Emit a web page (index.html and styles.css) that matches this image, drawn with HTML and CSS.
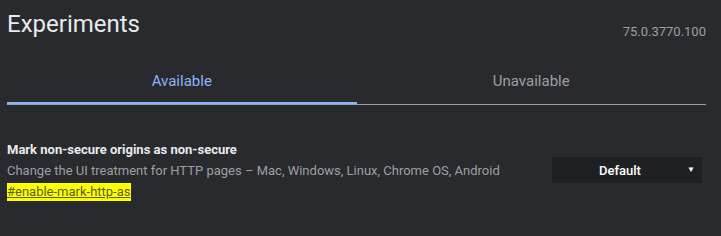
FILE: index.html
```html
<!DOCTYPE html>
<html lang="en">
<head>
    <meta charset="UTF-8">
    <title>Experiments</title>
    <link rel="stylesheet" href="styles.css">
</head>
<body>

    <div class="header">
        <h1>Experiments</h1>
        <span class="version">75.0.3770.100</span>
    </div>

    <div class="tabs">
        <div class="tab active">Available</div>
        <div class="tab">Unavailable</div>
    </div>

    <div class="experiment">
        <div class="info">
            <h2>Mark non-secure origins as non-secure</h2>
            <p>Change the UI treatment for HTTP pages – Mac, Windows, Linux, Chrome OS, Android</p>
            <a class="permalink" href="#enable-mark-http-as">#enable-mark-http-as</a>
        </div>
        <div class="select">
            <span>Default</span>
            <span class="arrow">▼</span>
        </div>
    </div>

</body>
</html>
```

FILE: styles.css
```css
body {
    font-family: Roboto, "Liberation Sans", sans-serif;
    background-color: #292a2d;
    color: #e8eaed;
    margin: 0;
    padding: 0 15px 0 7px;
}
.header {
    display: flex;
    justify-content: space-between;
    align-items: flex-end;
    height: 40px;
}
.header h1 {
    margin: 0;
    font-size: 24px;
    font-weight: normal;
    line-height: 28px;
    position: relative;
    top: -2px;
}
.version {
    font-size: 13px;
    color: #9aa0a6;
    line-height: 15px;
    position: relative;
    top: -1px;
}
.tabs {
    display: flex;
    margin-top: 22px;
    border-bottom: 1px solid #9aa0a6;
}
.tab {
    flex: 1;
    text-align: center;
    font-size: 15px;
    color: #9aa0a6;
    height: 42px;
    line-height: 38px;
}
.tab.active {
    color: #8ab4f8;
    border-bottom: 2px solid #8ab4f8;
    height: 40px;
    margin-bottom: -1px;
}
.experiment {
    display: flex;
    justify-content: space-between;
    align-items: center;
    margin-top: 37px;
}
.info h2 {
    margin: 0;
    font-size: 13px;
    font-weight: bold;
    line-height: 15px;
}
.info p {
    margin: 6px 0 0;
    font-size: 13px;
    color: #9aa0a6;
    line-height: 15px;
}
.permalink {
    display: inline-block;
    margin-top: 5px;
    background: #ffff00;
    color: #5a5f12;
    font-size: 13px;
    line-height: 18px;
}
.select {
    width: 136px;
    height: 26px;
    padding-right: 14px;
    background: #1f2023;
    display: flex;
    align-items: center;
    justify-content: center;
    position: relative;
    font-size: 13px;
    font-weight: 500;
    color: #ffffff;
    margin-right: 4px;
    margin-top: -3px;
}
.select .arrow {
    position: absolute;
    right: 7px;
    font-size: 8px;
    top: 8px;
}
```
